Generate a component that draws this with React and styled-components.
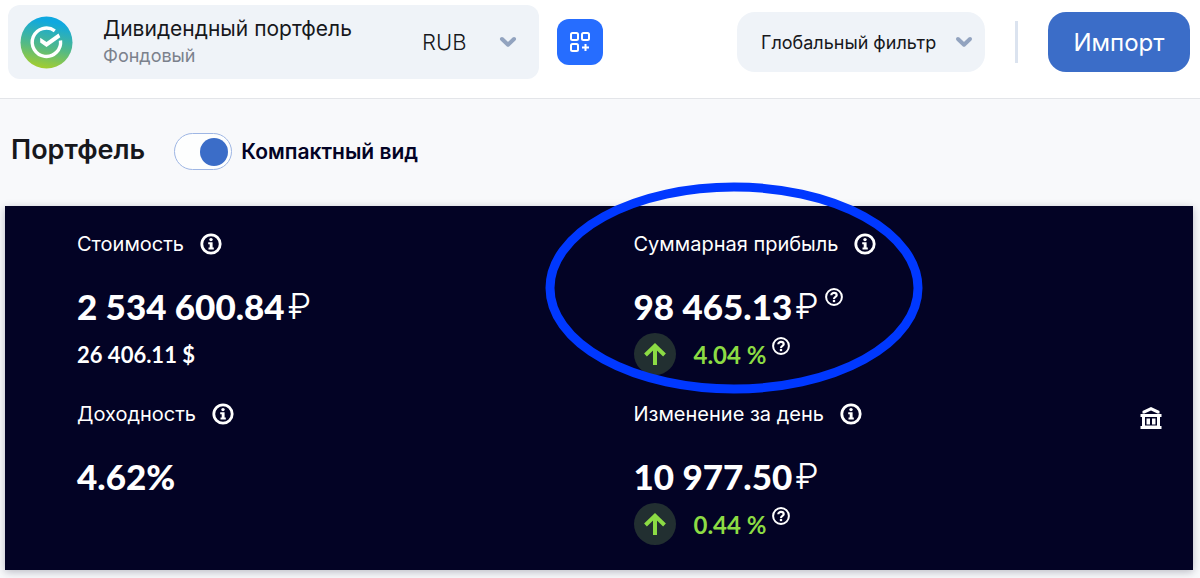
import React, { useState } from "react";
import styled, { createGlobalStyle } from "styled-components";

const App = () => {
    const [compact, setCompact] = useState(true);
    return (
        <>
            <GlobalStyle />
            <Header>
                <Portfolio>
                    <SberLogo />
                    <PortfolioText>
                        <PortfolioName>Дивидендный портфель</PortfolioName>
                        <PortfolioType>Фондовый</PortfolioType>
                    </PortfolioText>
                    <CurrencyField>
                        <Select aria-label="Валюта" defaultValue="RUB">
                            <option>RUB</option>
                            <option>USD</option>
                        </Select>
                        <Chevron />
                    </CurrencyField>
                </Portfolio>
                <AddButton aria-label="Добавить">
                    <WidgetsIcon />
                </AddButton>
                <FilterField>
                    <Select aria-label="Фильтр">
                        <option>Глобальный фильтр</option>
                    </Select>
                    <Chevron />
                </FilterField>
                <Divider />
                <ImportButton>Импорт</ImportButton>
            </Header>
            <main>
                <TitleRow>
                    <h1>Портфель</h1>
                    <Toggle
                        id="compact"
                        type="checkbox"
                        role="switch"
                        checked={compact}
                        onChange={() => setCompact(!compact)}
                    />
                    <label htmlFor="compact">Компактный вид</label>
                </TitleRow>
                <Card>
                    <Stat title="Стоимость" value="2 534 600.84" ruble>
                        <SubValue>26 406.11 $</SubValue>
                    </Stat>
                    <Stat title="Суммарная прибыль" value="98 465.13" ruble help circled>
                        <Growth percent="4.04 %" />
                    </Stat>
                    <Stat title="Доходность" value="4.62%" />
                    <Stat title="Изменение за день" value="10 977.50" ruble bank>
                        <Growth percent="0.44 %" />
                    </Stat>
                </Card>
            </main>
        </>
    );
};

const Stat = ({ title, value, ruble, help, circled, bank, children }) => (
    <StatCell>
        <StatTitle>
            {title}
            <InfoIcon />
            {bank && <BankButton aria-label="Банк"><BankIcon /></BankButton>}
        </StatTitle>
        <StatValue>
            {value}
            {ruble && <Ruble>₽</Ruble>}
            {help && <HelpIcon />}
        </StatValue>
        <StatFooter>{children}</StatFooter>
        {circled && <Highlight />}
    </StatCell>
);

const Growth = ({ percent }) => (
    <>
        <ArrowBadge>
            <svg width="22" height="22" viewBox="0 0 22 22" fill="none" stroke="#8cdb44" strokeWidth="4">
                <path d="M11 22V3M1.5 12L11 2.8l9.5 9.2" />
            </svg>
        </ArrowBadge>
        <SubValue $up>{percent}</SubValue>
        <HelpIcon />
    </>
);

//Icons
const SberLogo = () => (
    <svg width="53" height="53" viewBox="0 0 53 53" fill="none">
        <defs>
            <linearGradient id="sber" x1="0.6" y1="0" x2="0.4" y2="1">
                <stop offset="0.1" stopColor="#0fa8e0" />
                <stop offset="0.6" stopColor="#55ba84" />
                <stop offset="1" stopColor="#a6ce2c" />
            </linearGradient>
        </defs>
        <circle cx="26.5" cy="26.5" r="26" fill="url(#sber)" />
        <path d="M34.8 14.8A14.2 14.2 0 1 0 40.5 24.5" stroke="#fff" strokeWidth="3.4" />
        <path d="M20.2 21.800v4.800l6.300 4.400 13.800-9.800-1.800-3.600-12 8.400z" fill="#fff" />
    </svg>
);

const Chevron = () => (
    <ChevronSvg width="18" height="12" viewBox="0 0 18 12">
        <path d="M3 3L9 8.7l6-5.7" />
    </ChevronSvg>
);

const WidgetsIcon = () => (
    <svg width="22" height="22" viewBox="0 0 22 22" fill="none" stroke="#fff" strokeWidth="2">
        <rect x="2" y="2" width="7" height="7" rx="1.5" />
        <rect x="13" y="2" width="7" height="7" rx="1.5" />
        <rect x="2" y="13" width="7" height="7" rx="1.5" />
        <path d="M16.5 13v7M13 16.5h7" />
    </svg>
);

const InfoIcon = () => (
    <svg width="22" height="22" viewBox="0 0 22 22">
        <circle cx="11" cy="11" r="9.2" fill="none" stroke="#fff" strokeWidth="2.8" />
        <circle cx="11" cy="6.6" r="1.7" fill="#fff" />
        <path d="M8.2 9.3h4.4v5.2h1.2v1.9H8.5v-1.9h1.2v-3.3H8.2z" fill="#fff" />
    </svg>
);

const HelpIcon = () => (
    <HelpSvg width="18" height="18" viewBox="0 0 18 18" fill="none" stroke="#fff">
        <circle cx="9" cy="9" r="7.9" strokeWidth="2" />
        <path d="M6.3 7.2C6.3 4.2 11.7 4.2 11.7 7.2 11.7 9 9 8.8 9 11" strokeWidth="2.2" />
        <circle cx="9" cy="13" r="1.3" fill="#fff" stroke="none" />
    </HelpSvg>
);

const BankIcon = () => (
    <svg width="22" height="24" viewBox="0 0 22 24" fill="#fff">
        <path d="M11 1l8.5 4v2.5h-2L11 4.5l-6.5 3h-2V5z" />
        <path fillRule="evenodd" d="M.5 8h21v3H20v9h1.5v3H.5v-3H2v-9H.5zM5 11v8.5h12V11z" />
        <path d="M6.5 12.5H10v6H6.5zM12 12.5h3.5v6H12z" />
    </svg>
);

const Highlight = () => (
    <HighlightSvg width="378" height="214" viewBox="0 0 378 214" fill="none">
        <ellipse cx="189" cy="107" rx="184" ry="101" stroke="#0038ff" strokeWidth="9" />
    </HighlightSvg>
);

//Styles
const GlobalStyle = createGlobalStyle`
    *{
        box-sizing: border-box;
    }
    body{
        margin: 0;
        background: #f8f9fb;
        color: #17181c;
        font-family: "Inter", "Liberation Sans", sans-serif;
    }
    button, select{
        font: inherit;
        border: none;
        cursor: pointer;
    }
    svg{
        flex-shrink: 0;
    }
`;

const Header = styled.header`
    display: flex;
    align-items: center;
    padding: 5px 10px 19px 8px;
    background: #fff;
    border-bottom: 1px solid #e3e5e9;
`;

const Portfolio = styled.div`
    display: flex;
    align-items: center;
    flex: 0 1 531px;
    height: 74px;
    padding: 0 22px 0 12px;
    background: #eff3f8;
    border-radius: 12px;
`;

const PortfolioText = styled.div`
    flex: 1;
    padding-left: 30px;
    white-space: nowrap;
`;

const PortfolioName = styled.div`
    font-size: 21px;
    line-height: 28px;
`;

const PortfolioType = styled.div`
    font-size: 18px;
    line-height: 26px;
    color: #7b818c;
`;

//select and its chevron share one grid cell
const Field = styled.div`
    display: grid;
    align-items: center;
    > *{
        grid-area: 1 / 1;
    }
`;

const Select = styled.select`
    appearance: none;
    width: 100%;
    height: 100%;
    padding: 0;
    background: transparent;
    color: #17181c;
    outline: none;
`;

const ChevronSvg = styled.svg`
    justify-self: end;
    pointer-events: none;
    fill: none;
    stroke: #92a3bf;
    stroke-width: 4;
    stroke-linecap: round;
    stroke-linejoin: round;
`;

const CurrencyField = styled(Field)`
    width: 95px;
    height: 40px;
    font-size: 22px;
    font-weight: 300;
`;

const FilterField = styled(Field)`
    width: 248px;
    height: 60px;
    margin-left: auto;
    padding: 0 12px 0 24px;
    background: #eff3f8;
    border-radius: 18px;
    font-size: 18px;
`;

const AddButton = styled.button`
    display: grid;
    place-items: center;
    width: 46px;
    height: 46px;
    margin-left: 18px;
    padding: 0;
    background: #266dff;
    border-radius: 12px;
`;

const Divider = styled.div`
    width: 3px;
    height: 42px;
    margin: 0 30px;
    background: #dbe3ef;
`;

const ImportButton = styled.button`
    width: 142px;
    height: 60px;
    padding: 0;
    background: #3b6dc8;
    color: #fff;
    border-radius: 18px;
    font-size: 24px;
`;

const TitleRow = styled.div`
    display: flex;
    align-items: center;
    padding: 34px 11px 36px;
    h1{
        margin: 0;
        padding-bottom: 4px;
        font-size: 27px;
        font-weight: 600;
        line-height: 32px;
    }
    label{
        font-size: 21px;
        font-weight: 600;
        color: #030325;
    }
`;

const Toggle = styled.input`
    appearance: none;
    display: flex;
    align-items: center;
    width: 58px;
    height: 37px;
    margin: 0 9px 0 29px;
    padding: 0 3px;
    background: #fdfefe;
    border: 1px solid #9eb6e4;
    border-radius: 19px;
    cursor: pointer;
    &::before{
        content: "";
        width: 28px;
        height: 28px;
        border-radius: 50%;
        background: #3b6dc8;
    }
    &:checked{
        justify-content: flex-end;
    }
`;

const Card = styled.section`
    display: grid;
    grid-template-columns: 1fr 1fr;
    row-gap: 25px;
    margin: 0 7px 8px 5px;
    padding: 24px 3px 25px 72px;
    background: #030325;
    color: #fff;
    box-shadow: 0 2px 8px rgba(3, 3, 37, 0.25);
`;

const StatCell = styled.div`
    position: relative;
`;

const StatTitle = styled.div`
    display: flex;
    align-items: center;
    gap: 16px;
    height: 28px;
    font-size: 20px;
`;

const StatValue = styled.div`
    display: flex;
    align-items: center;
    height: 44px;
    margin-top: 26px;
    font-family: "Lato", sans-serif;
    font-size: 35px;
    font-weight: 900;
`;

const Ruble = styled.span`
    margin-left: 3px;
    font-family: "Inter", sans-serif;
    font-weight: 300;
`;

const StatFooter = styled.div`
    display: flex;
    align-items: center;
    height: 42px;
    margin-top: 5px;
`;

const SubValue = styled.span`
    margin-left: ${({ $up }) => ($up ? "18px" : "0")};
    font-family: "Lato", sans-serif;
    font-size: ${({ $up }) => ($up ? "24px" : "22px")};
    font-weight: 700;
    color: ${({ $up }) => ($up ? "#8cdb44" : "#fff")};
`;

const ArrowBadge = styled.span`
    display: grid;
    place-items: center;
    width: 42px;
    height: 42px;
    border-radius: 50%;
    background: #222f31;
`;

const HelpSvg = styled.svg`
    align-self: flex-start;
    margin: 4px 0 0 6px;
`;

const BankButton = styled.button`
    height: 24px;
    margin: 8px 28px 0 auto;
    padding: 0;
    background: none;
`;

//hand drawn ring over the profit block
const HighlightSvg = styled.svg`
    position: absolute;
    top: -49px;
    left: -89px;
    pointer-events: none;
`;

export default App;
